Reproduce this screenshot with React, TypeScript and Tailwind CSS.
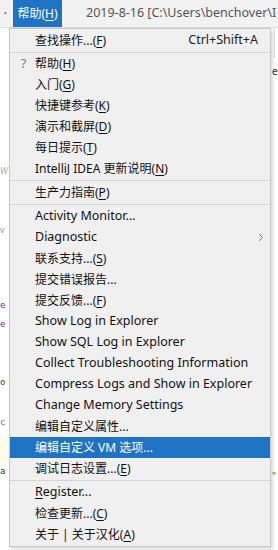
import type { ReactNode } from "react";

type Entry =
  | { kind: "sep"; h: string }
  | {
      kind: "item";
      label: ReactNode;
      shortcut?: string;
      help?: boolean;
      sub?: boolean;
      active?: boolean;
      latin?: boolean;
    };

const u = (c: string) => <span className="underline underline-offset-2">{c}</span>;

const entries: Entry[] = [
  { kind: "item", label: <>查找操作...({u("F")})</>, shortcut: "Ctrl+Shift+A" },
  { kind: "sep", h: "h-[2px]" },
  { kind: "item", label: <>帮助({u("H")})</>, help: true },
  { kind: "item", label: <>入门({u("G")})</> },
  { kind: "item", label: <>快捷键参考({u("K")})</> },
  { kind: "item", label: <>演示和截屏({u("D")})</> },
  { kind: "item", label: <>每日提示({u("T")})</> },
  { kind: "item", label: <>IntelliJ IDEA 更新说明({u("N")})</> },
  { kind: "sep", h: "h-[3px]" },
  { kind: "item", label: <>生产力指南({u("P")})</> },
  { kind: "sep", h: "h-[3px]" },
  { kind: "item", label: "Activity Monitor...", latin: true },
  { kind: "item", label: "Diagnostic", sub: true, latin: true },
  { kind: "item", label: <>联系支持...({u("S")})</> },
  { kind: "item", label: "提交错误报告..." },
  { kind: "item", label: <>提交反馈...({u("F")})</> },
  { kind: "item", label: "Show Log in Explorer", latin: true },
  { kind: "item", label: "Show SQL Log in Explorer", latin: true },
  { kind: "item", label: "Collect Troubleshooting Information", latin: true },
  { kind: "item", label: "Compress Logs and Show in Explorer", latin: true },
  { kind: "item", label: "Change Memory Settings", latin: true },
  { kind: "item", label: "编辑自定义属性..." },
  { kind: "item", label: "编辑自定义 VM 选项...", active: true },
  { kind: "item", label: <>调试日志设置...({u("E")})</> },
  { kind: "sep", h: "h-[3px]" },
  { kind: "item", label: <>{u("R")}egister...</>, latin: true },
  { kind: "item", label: <>检查更新...({u("C")})</> },
  { kind: "item", label: <>关于 | 关于汉化({u("A")})</> },
];

export default function App() {
  return (
    <div className="relative w-[278px] h-[550px] overflow-hidden bg-white font-['Noto_Sans','Noto_Sans_CJK_SC',sans-serif] text-[12px] text-[#111]">
      {/* menu bar */}
      <div className="flex h-[28px] items-center overflow-hidden bg-[#f2f2f2] border-b border-[#dcdcdc] whitespace-nowrap">
        <div className="w-[13px] h-full shrink-0 flex items-center justify-end pr-[6px] text-[#333]">·</div>
        <div className="flex h-full w-[49px] shrink-0 items-center justify-center bg-[#1f73c4] text-white">
          帮助({u("H")})
        </div>
        <div className="ml-[24px] shrink-0 text-[#555] text-[12.5px]">2019-8-16 [C:\Users\benchover\I</div>
      </div>

      {/* editor fragments behind the popup */}
      <div className="absolute left-0 top-[436px] w-[9px] h-[26px] bg-[#fffbea]" />
      <span className="absolute left-0 top-[164px] italic text-[#aaa] text-[9px]">W</span>
      <span className="absolute left-0 top-[223px] text-[#999] text-[9px]">v</span>
      <span className="absolute left-0 top-[299px] font-['DejaVu_Sans_Mono',monospace] text-[#6b2a8c] text-[9px]">e</span>
      <span className="absolute left-0 top-[318px] font-['DejaVu_Sans_Mono',monospace] text-[#6b2a8c] text-[9px]">e</span>
      <span className="absolute left-0 top-[376px] font-['DejaVu_Sans_Mono',monospace] text-[#333] text-[9px]">o</span>
      <span className="absolute left-0 top-[416px] font-['DejaVu_Sans_Mono',monospace] text-[#777] text-[9px]">c</span>
      <span className="absolute left-0 top-[465px] font-['DejaVu_Sans_Mono',monospace] text-[#333] text-[9px]">a</span>
      <span className="absolute left-[272px] top-[64px] text-[#333] text-[10px]">e</span>
      <span className="absolute left-[272px] top-[469px] text-[#3a8a2a] text-[10px]">"</span>
      <div className="absolute left-[274px] top-[28px] w-px h-[30px] bg-[#dcdcdc]" />

      {/* popup menu */}
      <div className="absolute left-[9px] top-[28px] w-[262px] border border-[#c9c9c9] bg-[#f0f0f0] py-px shadow-[2px_2px_3px_rgba(0,0,0,0.15)]">
        {entries.map((e, i) =>
          e.kind === "sep" ? (
            <div key={i} className={`${e.h} flex items-center`}>
              <div className="h-px w-full bg-[#d4d4d4]" />
            </div>
          ) : (
            <div
              key={i}
              className={`flex h-[21px] items-center whitespace-nowrap pr-[12px] ${
                e.active ? "bg-[#1f73c4] text-white" : ""
              }`}
            >
              <div className="w-[25px] flex justify-center pl-[2px] text-[#777] text-[13px]">
                {e.help ? "?" : ""}
              </div>
              <div className={`flex-1 ${e.latin ? "text-[12.5px]" : ""}`}>{e.label}</div>
              {e.shortcut && <div className="text-[12.5px] text-[#222]">{e.shortcut}</div>}
              {e.sub && (
                <svg width="6" height="9" viewBox="0 0 6 9" className="mr-[-6px]">
                  <path d="M1 1l3.5 3.5L1 8" fill="none" stroke="#777" strokeWidth="1" />
                </svg>
              )}
            </div>
          )
        )}
      </div>
    </div>
  );
}
